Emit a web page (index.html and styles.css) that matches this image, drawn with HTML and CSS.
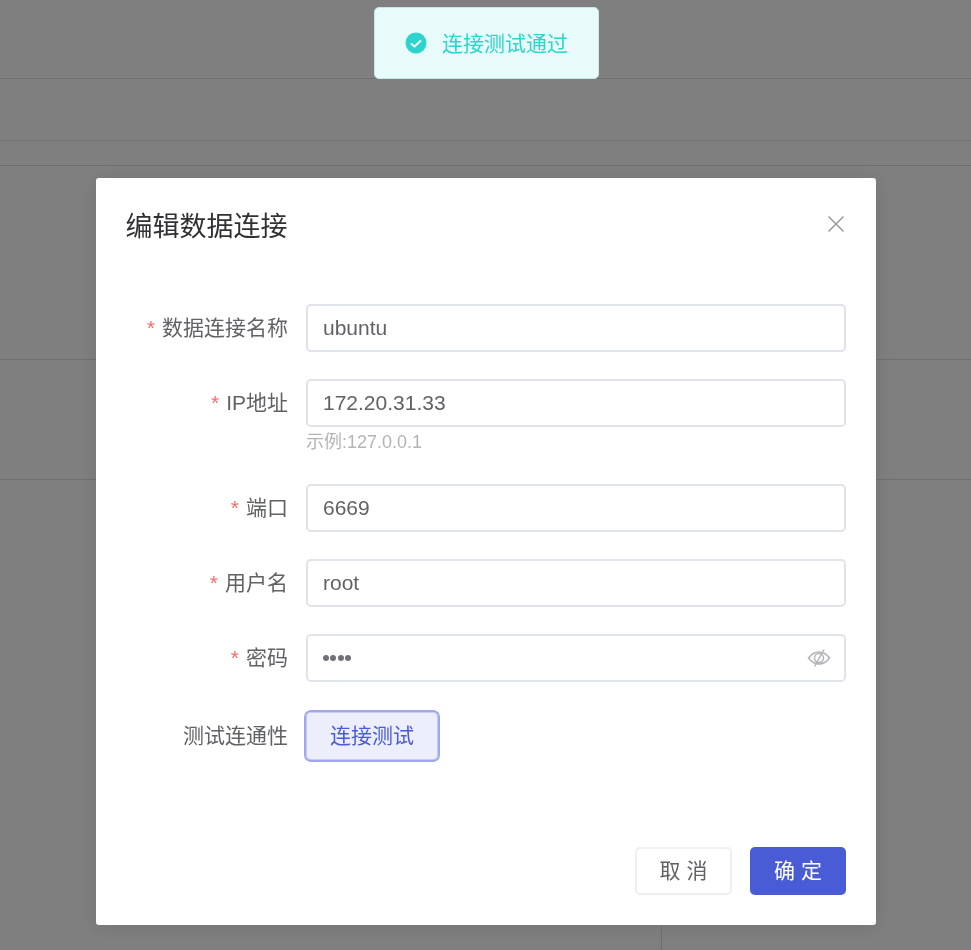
FILE: index.html
```html
<!DOCTYPE html>
<html lang="zh-CN">
<head>
<meta charset="utf-8">
<title>编辑数据连接</title>
<link rel="stylesheet" href="styles.css">
</head>
<body>
<div class="page">
  <div class="band band-1"></div>
  <div class="band band-2"></div>
  <div class="band band-3"></div>
  <div class="band band-4"></div>
  <div class="band band-5"></div>
  <div class="page-foot"></div>
</div>
<div class="overlay">
  <div class="modal">
    <header class="modal-head">
      <h2 class="modal-title">编辑数据连接</h2>
      <button class="close" aria-label="关闭">
        <svg viewBox="0 0 18 18" width="18" height="18"><path d="M1.500 1.500l15 15M16.500 1.500l-15 15" fill="none" stroke="#909399" stroke-width="1.400"/></svg>
      </button>
    </header>
    <form class="form">
      <div class="row">
        <label class="label"><span class="req">*</span>数据连接名称</label>
        <div class="field"><div class="input">ubuntu</div></div>
      </div>
      <div class="row row-hint">
        <label class="label"><span class="req">*</span>IP地址</label>
        <div class="field"><div class="input">172.20.31.33</div><div class="hint">示例:127.0.0.1</div></div>
      </div>
      <div class="row">
        <label class="label"><span class="req">*</span>端口</label>
        <div class="field"><div class="input">6669</div></div>
      </div>
      <div class="row">
        <label class="label"><span class="req">*</span>用户名</label>
        <div class="field"><div class="input">root</div></div>
      </div>
      <div class="row">
        <label class="label"><span class="req">*</span>密码</label>
        <div class="field">
          <div class="input input-pass"><span class="dots"><i></i><i></i><i></i><i></i></span>
            <svg class="eye" viewBox="0 0 24 24" width="24" height="24" fill="none" stroke="#b4b4b8" stroke-width="1.500"><path d="M1.500 12C4.500 8 7.800 6 12 6s7.500 2 10.500 6c-3 4-6.300 6-10.500 6S4.500 16 1.500 12z"/><circle cx="12" cy="12" r="4.500"/><path d="M17 3.500L7.500 20.500"/></svg>
          </div>
        </div>
      </div>
      <div class="row row-test">
        <label class="label">测试连通性</label>
        <div class="field"><button type="button" class="test">连接测试</button></div>
      </div>
    </form>
    <footer class="modal-foot">
      <button type="button" class="btn btn-cancel">取 消</button>
      <button type="button" class="btn btn-ok">确 定</button>
    </footer>
  </div>
</div>
<div class="toast">
  <svg viewBox="0 0 22 22" width="22" height="22"><circle cx="11" cy="11" r="10.500" fill="#2bd4cd"/><path d="M6 11.500l3.500 3 6.500-6" fill="none" stroke="#fff" stroke-width="1.900"/></svg>
  <span class="toast-text">连接测试通过</span>
</div>
</body>
</html>
```
FILE: styles.css
```css
* { box-sizing: border-box; }
html, body { margin: 0; padding: 0; height: 100%; overflow: hidden; }
body {
  background: #fff;
  font-family: "Liberation Sans", "Noto Sans CJK SC", sans-serif;
  color: #606266;
}
.page { height: 950px; }
.band { border-bottom: 1px solid #e0e0e6; }
.band-1 { height: 79px; }
.band-2 { height: 62px; border-bottom-color: #dcdce6; }
.band-3 { height: 25px; }
.band-4 { height: 194px; }
.band-5 { height: 120px; }
.page-foot { width: 1px; height: 25px; margin: 446px 0 0 661px; background: #dcdce6; }
.overlay {
  position: fixed;
  inset: 0;
  background: rgba(0, 0, 0, .5);
  display: flex;
  justify-content: center;
  align-items: flex-start;
  padding-top: 178px;
}
.modal {
  width: 780px;
  height: 747px;
  margin-left: 1px;
  background: #fff;
  border-radius: 3px;
  box-shadow: 0 2px 20px rgba(0, 0, 0, .1);
  display: flex;
  flex-direction: column;
}
.modal-head {
  display: flex;
  justify-content: space-between;
  align-items: center;
  padding: 28px 30px 0;
}
.modal-title {
  margin: 1px 0 0 -.5px;
  font-size: 27px;
  font-weight: 400;
  line-height: 40px;
  color: #303133;
}
.close { border: 0; background: none; padding: 0; display: flex; margin: -5px 1px 0 0; }
.form { padding-top: 57px; flex: 1; }
.row { display: flex; height: 75px; }
.row-hint { height: 105px; }
.label {
  width: 192px;
  text-align: right;
  font-size: 21px;
  line-height: 47px;
  color: #606266;
  white-space: nowrap;
}
.req { color: #f56c6c; margin-right: 7px; }
.field { width: 540px; margin-left: 18px; }
.input {
  height: 48px;
  border: 2px solid #e1e3eb;
  border-radius: 5px;
  padding: 0 15px;
  font-size: 21px;
  line-height: 44px;
  color: #606266;
  background: #fff;
}
.input-pass { display: flex; align-items: center; justify-content: space-between; padding-right: 13px; }
.dots { display: flex; gap: 1.300px; }
.dots i { width: 6px; height: 6px; border-radius: 50%; background: #707276; }
.hint { font-size: 18px; line-height: 30px; color: #b4b4b6; }
.row-test { padding-top: 3px; }
.test {
  width: 132px;
  height: 48px;
  border: 1px solid #c8ccf3;
  border-radius: 5px;
  outline: 2px solid #a0a8ea;
  background: #edeefb;
  color: #4a5bd6;
  font: 21px "Liberation Sans", "Noto Sans CJK SC", sans-serif;
  padding: 0 0 4px;
}
.modal-foot { display: flex; justify-content: flex-end; gap: 18px; padding: 0 30px 30px; }
.btn {
  height: 48px;
  border-radius: 5px;
  font: 21px "Liberation Sans", "Noto Sans CJK SC", sans-serif;
  padding: 0 0 4px;
}
.btn-cancel { width: 97px; border: 2px solid #eeeff3; background: #fff; color: #606266; }
.btn-ok { width: 96px; border: 0; background: #4a5bd6; color: #fff; }
.toast {
  position: fixed;
  top: 7px;
  left: 374px;
  width: 225px;
  height: 72px;
  display: flex;
  align-items: center;
  gap: 16px;
  padding-left: 30px;
  background: #e8fbfa;
  border: 1px solid #c0ebe8;
  border-radius: 5px;
  color: #2bd4cd;
  font-size: 21px;
}
.toast-text { margin-top: -3px; margin-left: -1px; }
```
